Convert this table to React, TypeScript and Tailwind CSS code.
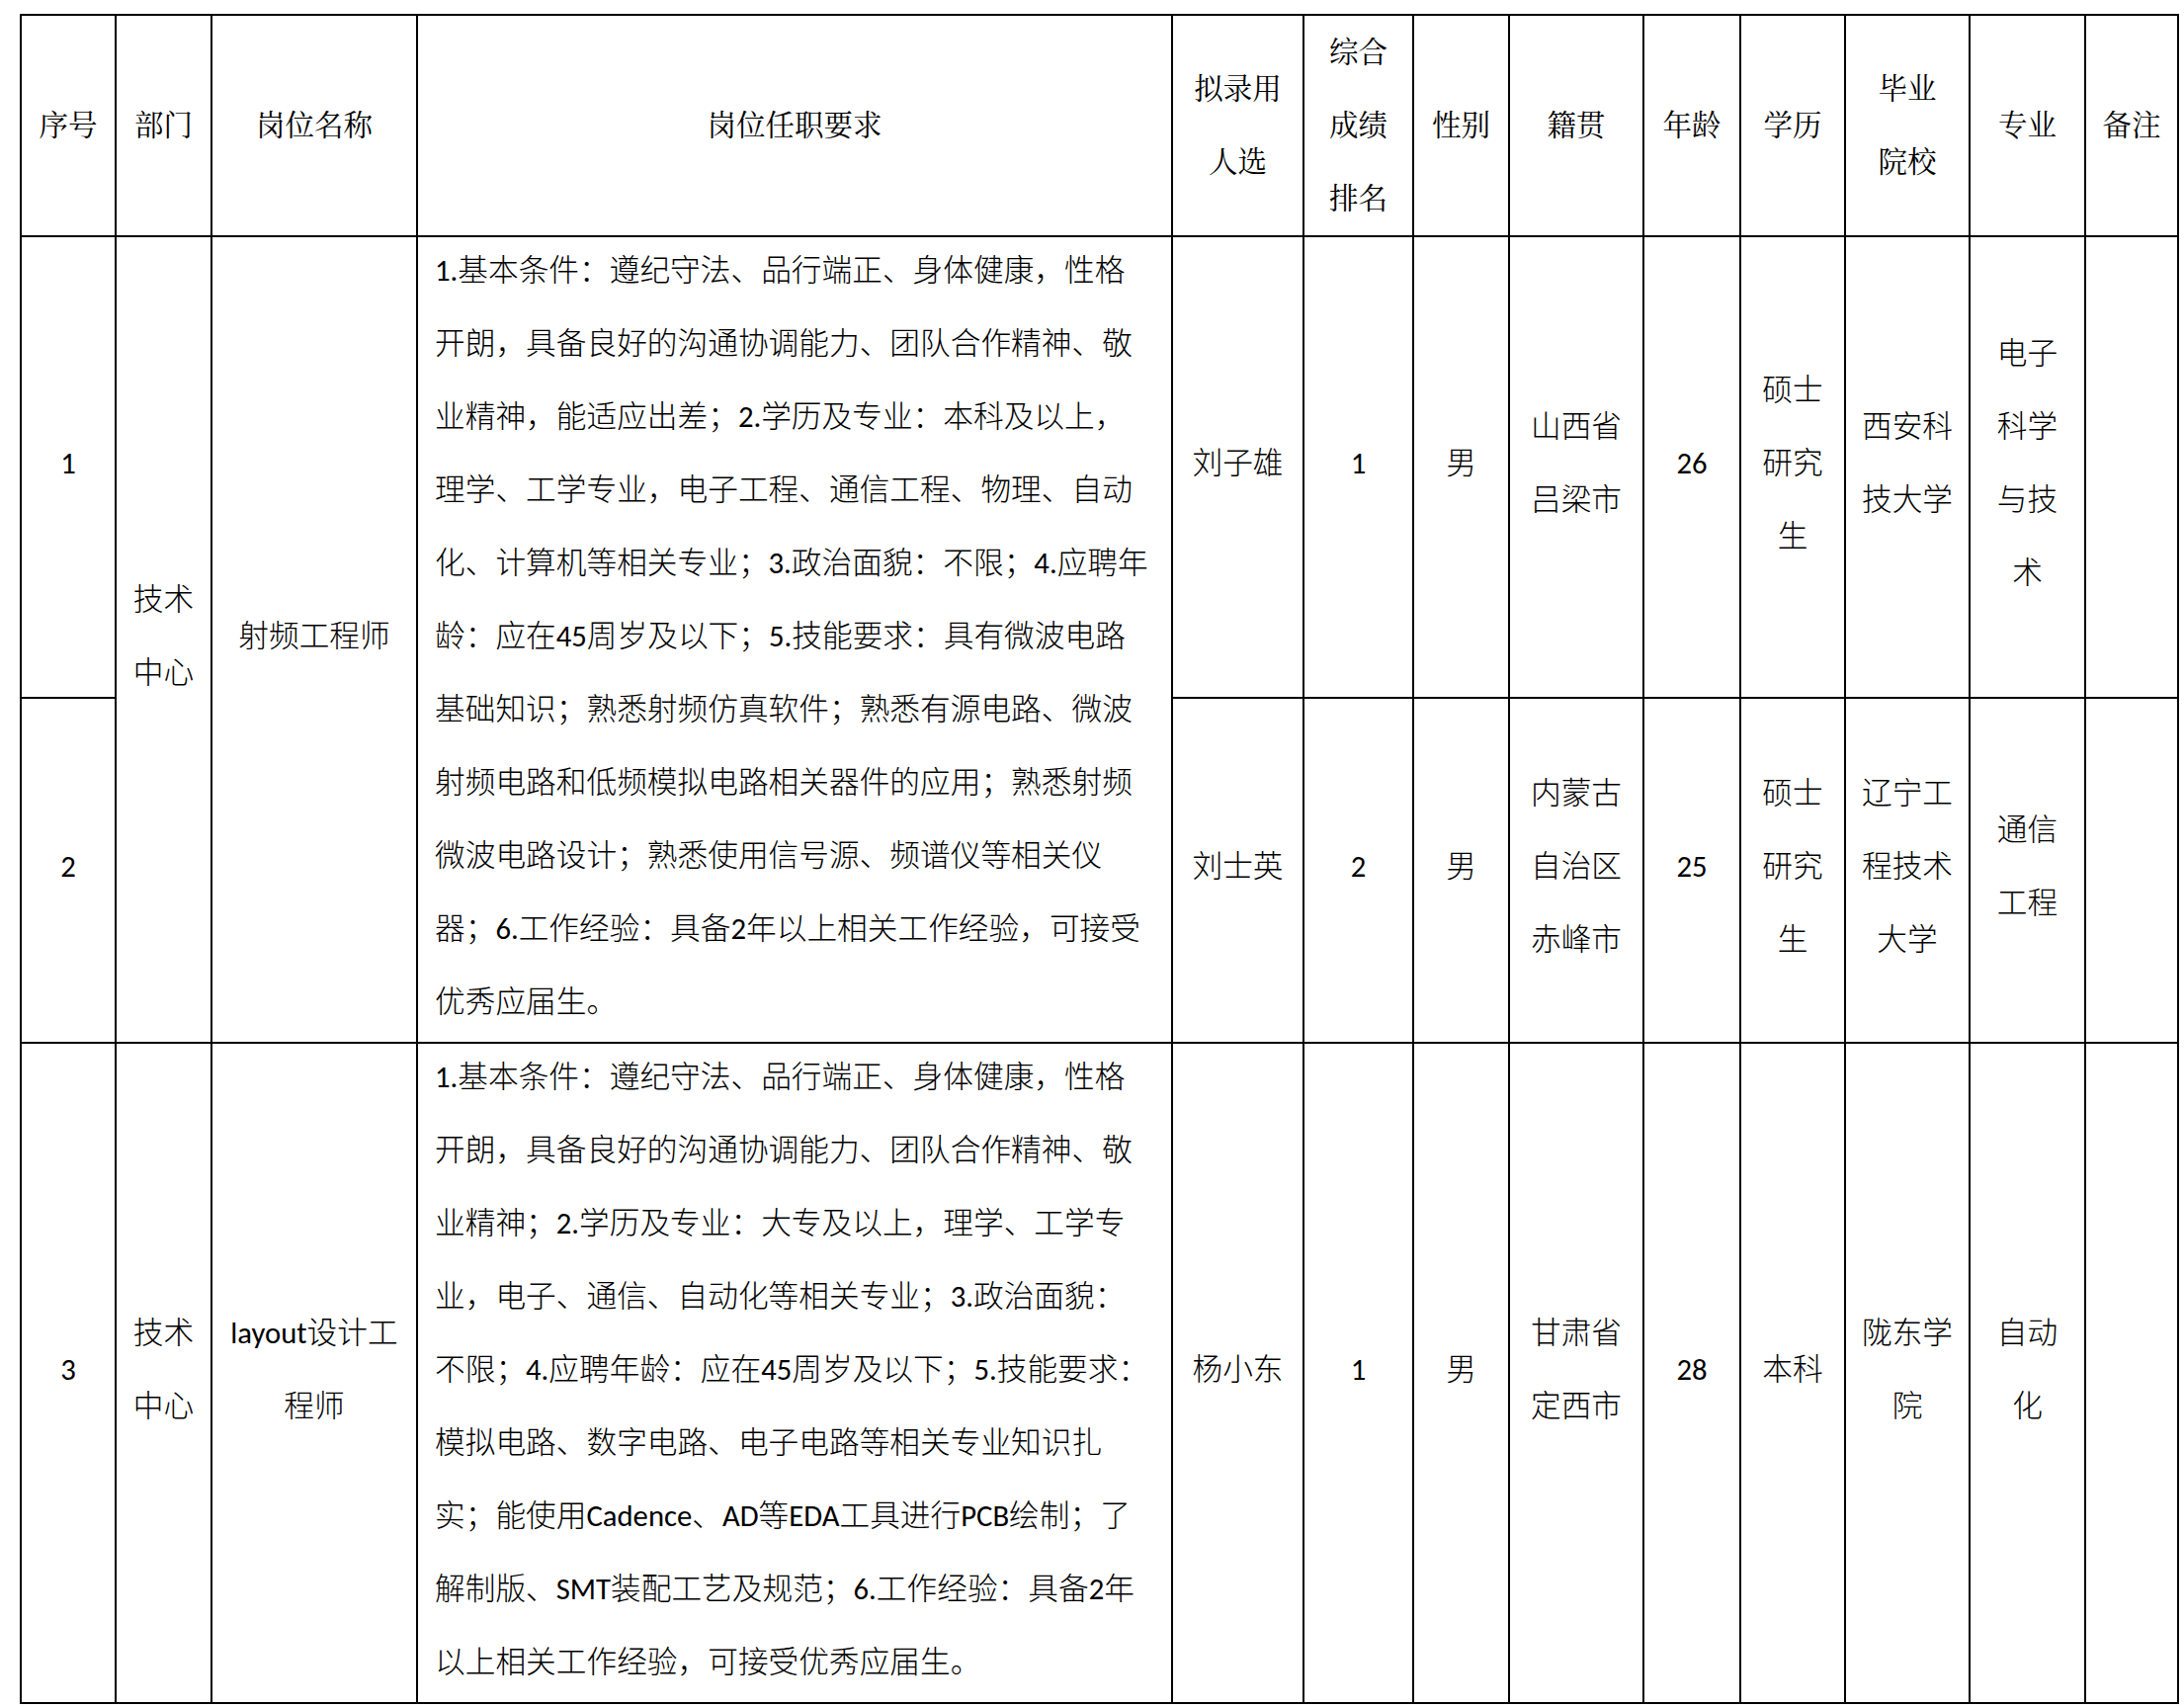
import React from "react";

const req1 = [
  "1.基本条件：遵纪守法、品行端正、身体健康，性格",
  "开朗，具备良好的沟通协调能力、团队合作精神、敬",
  "业精神，能适应出差；2.学历及专业：本科及以上，",
  "理学、工学专业，电子工程、通信工程、物理、自动",
  "化、计算机等相关专业；3.政治面貌：不限；4.应聘年",
  "龄：应在45周岁及以下；5.技能要求：具有微波电路",
  "基础知识；熟悉射频仿真软件；熟悉有源电路、微波",
  "射频电路和低频模拟电路相关器件的应用；熟悉射频",
  "微波电路设计；熟悉使用信号源、频谱仪等相关仪",
  "器；6.工作经验：具备2年以上相关工作经验，可接受",
  "优秀应届生。",
];

const req3 = [
  "1.基本条件：遵纪守法、品行端正、身体健康，性格",
  "开朗，具备良好的沟通协调能力、团队合作精神、敬",
  "业精神；2.学历及专业：大专及以上，理学、工学专",
  "业，电子、通信、自动化等相关专业；3.政治面貌：",
  "不限；4.应聘年龄：应在45周岁及以下；5.技能要求：",
  "模拟电路、数字电路、电子电路等相关专业知识扎",
  "实；能使用Cadence、AD等EDA工具进行PCB绘制；了",
  "解制版、SMT装配工艺及规范；6.工作经验：具备2年",
  "以上相关工作经验，可接受优秀应届生。",
];

function Lines({ items }: { items: string[] }) {
  return (
    <div className="-translate-y-[3px]">
      {items.map((l, i) => (
        <div key={i} className="whitespace-nowrap">
          {l}
        </div>
      ))}
    </div>
  );
}

function Th({ lines }: { lines: string[] }) {
  return (
    <th className="border-2 border-black p-0 text-center align-middle font-['Noto_Serif_CJK_SC','Noto_Sans_CJK_SC',serif] font-normal text-[29.5px] leading-[74px]">
      <Lines items={lines} />
    </th>
  );
}

function Td({ lines, rowSpan }: { lines: string[]; rowSpan?: number }) {
  return (
    <td
      rowSpan={rowSpan}
      className="border-2 border-black p-0 text-center align-middle text-[30.7px] leading-[74px]"
    >
      <Lines items={lines} />
    </td>
  );
}

function Req({ lines, rowSpan }: { lines: string[]; rowSpan?: number }) {
  return (
    <td
      rowSpan={rowSpan}
      className="border-2 border-black py-0 pl-[17px] pr-0 text-left align-middle text-[30.7px] leading-[74px]"
    >
      <Lines items={lines} />
    </td>
  );
}

export default function App() {
  return (
    <div className="min-h-screen bg-white pl-[20px] pt-[14px] font-['Carlito','Noto_Sans_CJK_SC',sans-serif] font-light text-black">
      <table className="w-[2185px] table-fixed border-collapse">
        <colgroup>
          <col className="w-[96px]" />
          <col className="w-[97px]" />
          <col className="w-[208px]" />
          <col className="w-[764px]" />
          <col className="w-[133px]" />
          <col className="w-[111px]" />
          <col className="w-[97px]" />
          <col className="w-[136px]" />
          <col className="w-[98px]" />
          <col className="w-[106px]" />
          <col className="w-[126px]" />
          <col className="w-[117px]" />
          <col className="w-[94px]" />
        </colgroup>
        <thead>
          <tr className="h-[222px]">
            <Th lines={["序号"]} />
            <Th lines={["部门"]} />
            <Th lines={["岗位名称"]} />
            <Th lines={["岗位任职要求"]} />
            <Th lines={["拟录用", "人选"]} />
            <Th lines={["综合", "成绩", "排名"]} />
            <Th lines={["性别"]} />
            <Th lines={["籍贯"]} />
            <Th lines={["年龄"]} />
            <Th lines={["学历"]} />
            <Th lines={["毕业", "院校"]} />
            <Th lines={["专业"]} />
            <Th lines={["备注"]} />
          </tr>
        </thead>
        <tbody>
          <tr className="h-[466px]">
            <Td lines={["1"]} />
            <Td rowSpan={2} lines={["技术", "中心"]} />
            <Td rowSpan={2} lines={["射频工程师"]} />
            <Req rowSpan={2} lines={req1} />
            <Td lines={["刘子雄"]} />
            <Td lines={["1"]} />
            <Td lines={["男"]} />
            <Td lines={["山西省", "吕梁市"]} />
            <Td lines={["26"]} />
            <Td lines={["硕士", "研究", "生"]} />
            <Td lines={["西安科", "技大学"]} />
            <Td lines={["电子", "科学", "与技", "术"]} />
            <Td lines={[]} />
          </tr>
          <tr className="h-[349px]">
            <Td lines={["2"]} />
            <Td lines={["刘士英"]} />
            <Td lines={["2"]} />
            <Td lines={["男"]} />
            <Td lines={["内蒙古", "自治区", "赤峰市"]} />
            <Td lines={["25"]} />
            <Td lines={["硕士", "研究", "生"]} />
            <Td lines={["辽宁工", "程技术", "大学"]} />
            <Td lines={["通信", "工程"]} />
            <Td lines={[]} />
          </tr>
          <tr className="h-[668px]">
            <Td lines={["3"]} />
            <Td lines={["技术", "中心"]} />
            <Td lines={["layout设计工", "程师"]} />
            <Req lines={req3} />
            <Td lines={["杨小东"]} />
            <Td lines={["1"]} />
            <Td lines={["男"]} />
            <Td lines={["甘肃省", "定西市"]} />
            <Td lines={["28"]} />
            <Td lines={["本科"]} />
            <Td lines={["陇东学", "院"]} />
            <Td lines={["自动", "化"]} />
            <Td lines={[]} />
          </tr>
        </tbody>
      </table>
    </div>
  );
}
